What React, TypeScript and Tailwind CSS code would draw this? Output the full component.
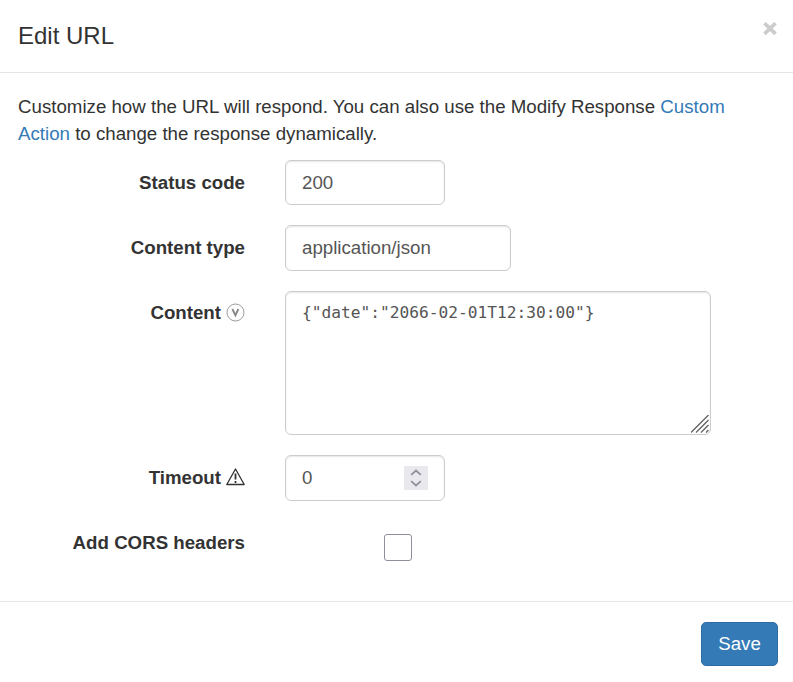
import React from "react";

const field =
  "block rounded-[6px] border border-[#ccc] bg-white px-4 text-[#555] shadow-[inset_0_1px_2px_rgba(0,0,0,0.1)] outline-none";

type RowProps = { label: string; children: React.ReactNode; icon?: React.ReactNode; tight?: boolean };

function Row({ label, children, icon, tight }: RowProps) {
  return (
    <div className="flex items-start">
      <div
        className={`flex w-[245px] shrink-0 items-center justify-end gap-[5px] text-[18.7px] leading-[27px] font-bold ${tight ? "pt-2" : "pt-[9px]"}`}
      >
        <span>{label}</span>
        {icon}
      </div>
      <div className="ml-10">{children}</div>
    </div>
  );
}

export default function App() {
  return (
    <div className="flex h-[682px] w-[793px] flex-col overflow-hidden bg-white font-['Liberation_Sans',Arial,sans-serif] text-[18.7px] leading-[27px] text-[#333]">
      <header className="flex h-[73px] shrink-0 items-start justify-between border-b border-[#e5e5e5] pt-[19px] pr-4 pl-[18px]">
        <h4 className="text-[24px] leading-[34px]">Edit URL</h4>
        <button aria-label="Close" className="mt-[3px] text-[#ccc]">
          <svg width="14" height="14" viewBox="0 0 14 14" stroke="currentColor" strokeWidth="3.7">
            <path d="M1.5 1.2l11 10.6M12.5 1.2l-11 10.6" />
          </svg>
        </button>
      </header>
      <main className="h-[528px] shrink-0 pt-5">
        <p className="h-[67px] pl-[18px] whitespace-nowrap">
          Customize how the URL will respond. You can also use the Modify Response <a className="text-[#337ab7]">Custom<br />Action</a> to change the response dynamically.
        </p>
        <form className="flex flex-col gap-5">
          <Row label="Status code">
            <input className={`${field} h-[45px] w-40`} defaultValue="200" />
          </Row>
          <Row label="Content type">
            <input className={`${field} h-[46px] w-[226px]`} defaultValue="application/json" />
          </Row>
          <Row
            tight
            label="Content"
            icon={
              <svg className="-mt-px" width="19" height="19" viewBox="0 0 19 19" fill="none" stroke="#999">
                <circle cx="9.5" cy="9.5" r="8.5" />
                <path d="M6.4 6l3 6.3 3-6.3" stroke="#888" strokeWidth="1.9" />
              </svg>
            }
          >
            <div className="relative">
              <textarea
                className={`${field} h-36 w-[426px] resize-none py-2 font-['DejaVu_Sans_Mono',monospace] text-[16.2px] leading-[25px]`}
                defaultValue={'{"date":"2066-02-01T12:30:00"}'}
              />
              <svg className="absolute right-[2px] bottom-[2px]" width="18" height="18" viewBox="0 0 18 18" stroke="#666" strokeWidth="1.4">
                <path d="M0 17.5L17.5 0M5 17.5L17.5 5M10 17.5l7.5-7.5M15 17.5l2.5-2.5" />
              </svg>
            </div>
          </Row>
          <Row
            label="Timeout"
            icon={
              <svg className="-mt-px" width="19" height="18" viewBox="0 0 19 18" fill="none" stroke="#333" strokeWidth="1.3" strokeLinejoin="round">
                <path d="M9.5 1L18.2 16.5H.8z" />
                <path d="M9.5 5.5v6M9.5 13v2" strokeWidth="1.8" />
              </svg>
            }
          >
            <div className={`${field} flex h-[46px] w-40 items-center justify-between`}>
              <span className="-mt-px">0</span>
              <svg width="24" height="24" viewBox="0 0 24 24" fill="none" stroke="#8f8f9d" strokeWidth="1.8">
                <path d="M0 0h24v24H0z" fill="#e9e9ed" stroke="none" />
                <path d="M7.2 8.8L12 4.5l4.8 4.3M7.2 15.2l4.8 4.3 4.8-4.3" />
              </svg>
            </div>
          </Row>
          <Row tight label="Add CORS headers">
            <div className="mt-[13px] ml-[99px] h-[27px] w-7 rounded-[3px] border border-[#8f8f9d]" />
          </Row>
        </form>
      </main>
      <footer className="flex justify-end border-t border-[#e5e5e5] pt-5 pr-[15px]">
        <button className="h-11 w-[77px] rounded-[5px] border border-[#2e6da4] bg-[#337ab7] pb-0.5 text-white">Save</button>
      </footer>
    </div>
  );
}
